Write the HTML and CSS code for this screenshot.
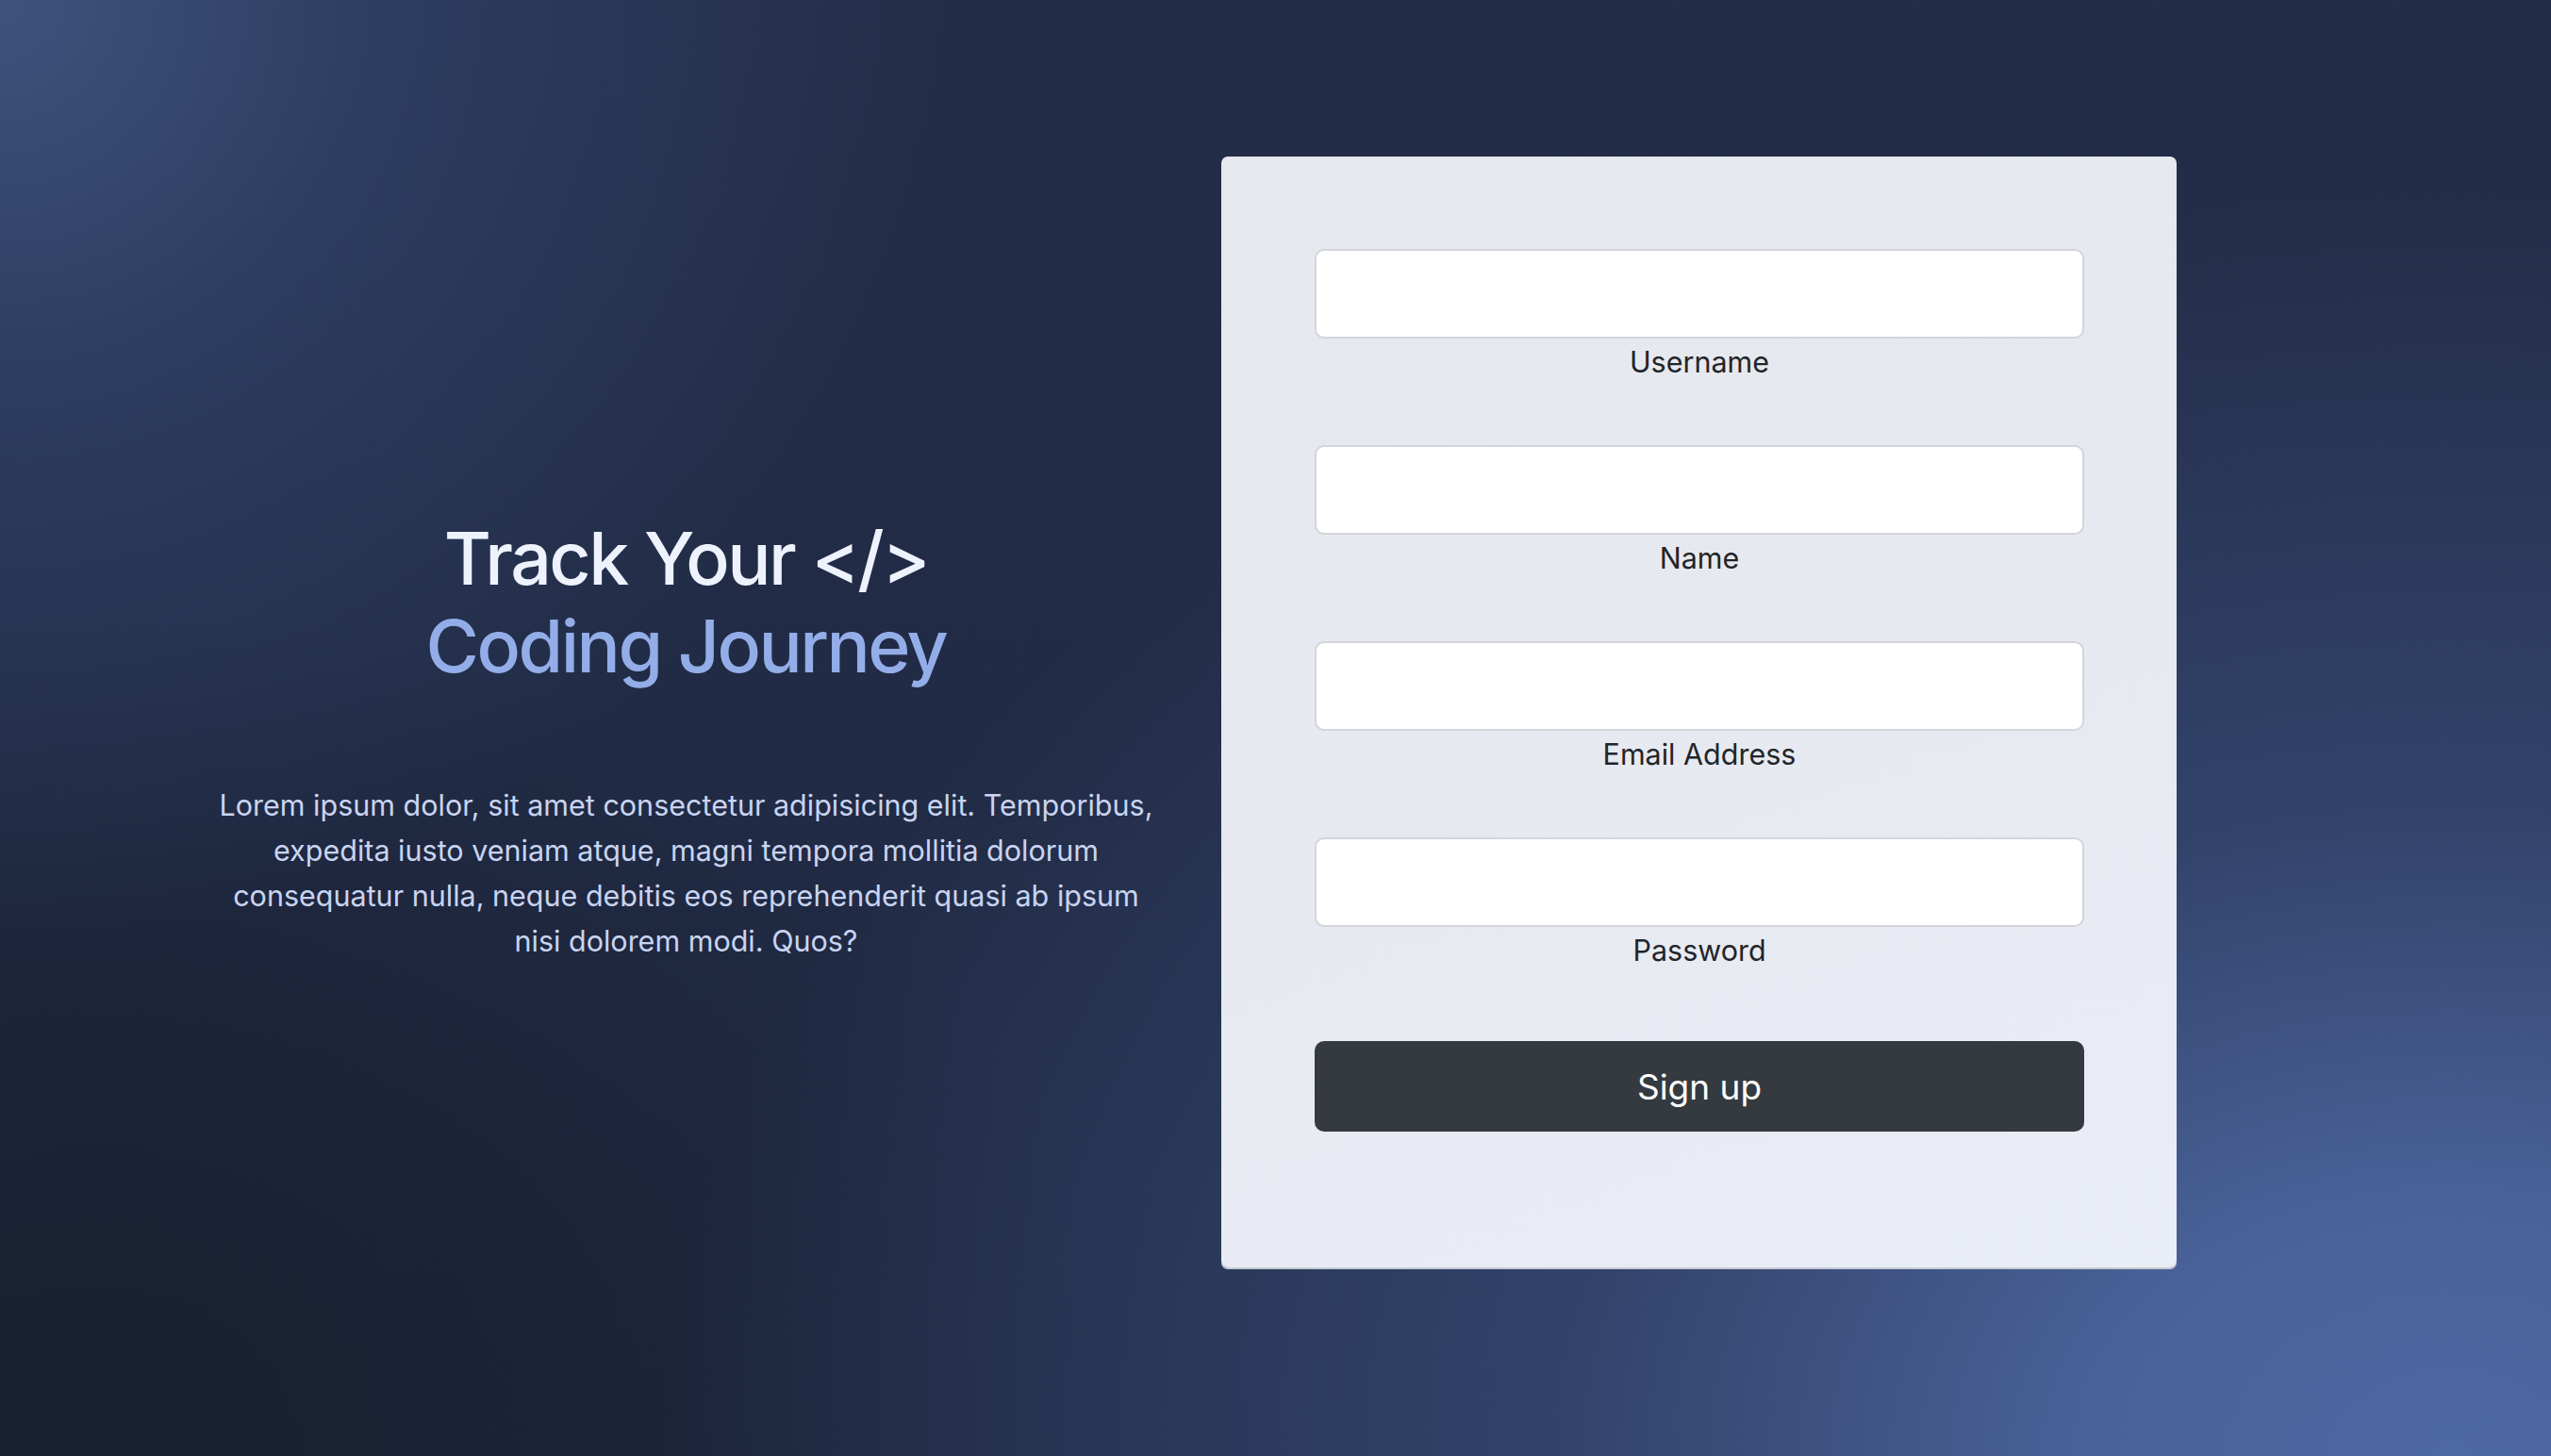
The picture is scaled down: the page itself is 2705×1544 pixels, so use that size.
FILE: index.html
```html
<!DOCTYPE html>
<html lang="en">
<head>
<meta charset="utf-8">
<title>Track Your Coding Journey</title>
<link rel="stylesheet" href="styles.css">
</head>
<body>
<main class="page">
  <section class="intro">
    <h1 class="title">
      <span class="title-line">Track Your &lt;/&gt;</span>
      <span class="title-accent">Coding Journey</span>
    </h1>
    <p class="lead">Lorem ipsum dolor, sit amet consectetur adipisicing elit. Temporibus, expedita iusto veniam atque, magni tempora mollitia dolorum consequatur nulla, neque debitis eos reprehenderit quasi ab ipsum nisi dolorem modi. Quos?</p>
  </section>
  <section class="card">
    <form class="signup">
      <div class="field">
        <input class="input" type="text" id="username">
        <label class="label" for="username">Username</label>
      </div>
      <div class="field">
        <input class="input" type="text" id="name">
        <label class="label" for="name">Name</label>
      </div>
      <div class="field">
        <input class="input" type="email" id="email">
        <label class="label" for="email">Email Address</label>
      </div>
      <div class="field">
        <input class="input" type="password" id="password">
        <label class="label" for="password">Password</label>
      </div>
      <button class="btn" type="button">Sign up</button>
    </form>
  </section>
</main>
</body>
</html>
```
FILE: styles.css
```css
* { box-sizing: border-box; }
html, body { margin: 0; padding: 0; }
body {
  width: 2705px;
  height: 1544px;
  overflow: hidden;
  font-family: Inter, "Noto Sans", sans-serif;
  background-color: #1f2942;
  background-image:
    radial-gradient(ellipse 1900px 1350px at 2600px 1544px, rgba(78,104,162,1) 0%, rgba(76,101,158,0.95) 20%, rgba(62,84,133,0.6) 50%, rgba(31,41,66,0) 100%),
    radial-gradient(ellipse 1000px 1000px at 0px 0px, rgba(62,83,125,1) 0%, rgba(52,72,112,0.6) 40%, rgba(31,41,66,0) 100%),
    radial-gradient(ellipse 1100px 900px at 100px 1544px, rgba(24,31,47,1) 0%, rgba(24,31,47,0.6) 45%, rgba(24,31,47,0) 100%),
    linear-gradient(180deg, #232d48 0%, #1f2942 100%);
}
.page {
  display: flex;
  align-items: flex-start;
  padding: 166px 0 0 160px;
}
.intro {
  width: 1135px;
  flex: none;
  text-align: center;
  padding-top: 380px;
  display: flex;
  flex-direction: column;
  align-items: center;
}
.title {
  margin: 0;
  font-weight: 500;
  font-size: 77px;
  line-height: 93px;
  letter-spacing: -2.5px;
  display: flex;
  flex-direction: column;
  align-items: center;
}
.title-line { color: #eef2fd; }
.title-accent { color: #93ade8; }
.lead {
  margin: 98px 0 0;
  width: 1005px;
  font-size: 30.5px;
  line-height: 48px;
  color: #c9d4f1;
}
.card {
  width: 1013px;
  height: 1178px;
  flex: none;
  background: linear-gradient(160deg, #e6e8ee 0%, #e7e9f0 50%, #e9edf6 100%);
  border-radius: 7px;
  box-shadow: 0 2px 0 #c4c9d3;
  padding: 98px 98px 0 99px;
}
.signup {
  display: flex;
  flex-direction: column;
}
.field {
  display: flex;
  flex-direction: column;
  align-items: center;
  margin-bottom: 69px;
}
.field:nth-child(4) { margin-bottom: 77px; }
.input {
  width: 100%;
  height: 95px;
  background: #ffffff;
  border: 2px solid #d2d5da;
  border-radius: 10px;
  margin: 0;
  padding: 0 20px;
  font: inherit;
  font-size: 30px;
}
.label {
  margin-top: 6px;
  font-size: 30.5px;
  line-height: 38px;
  color: #212529;
}
.btn {
  width: 100%;
  height: 96px;
  background: #343a40;
  color: #ffffff;
  border: none;
  border-radius: 10px;
  font-family: inherit;
  font-size: 37px;
  font-weight: 400;
  cursor: pointer;
}
```
